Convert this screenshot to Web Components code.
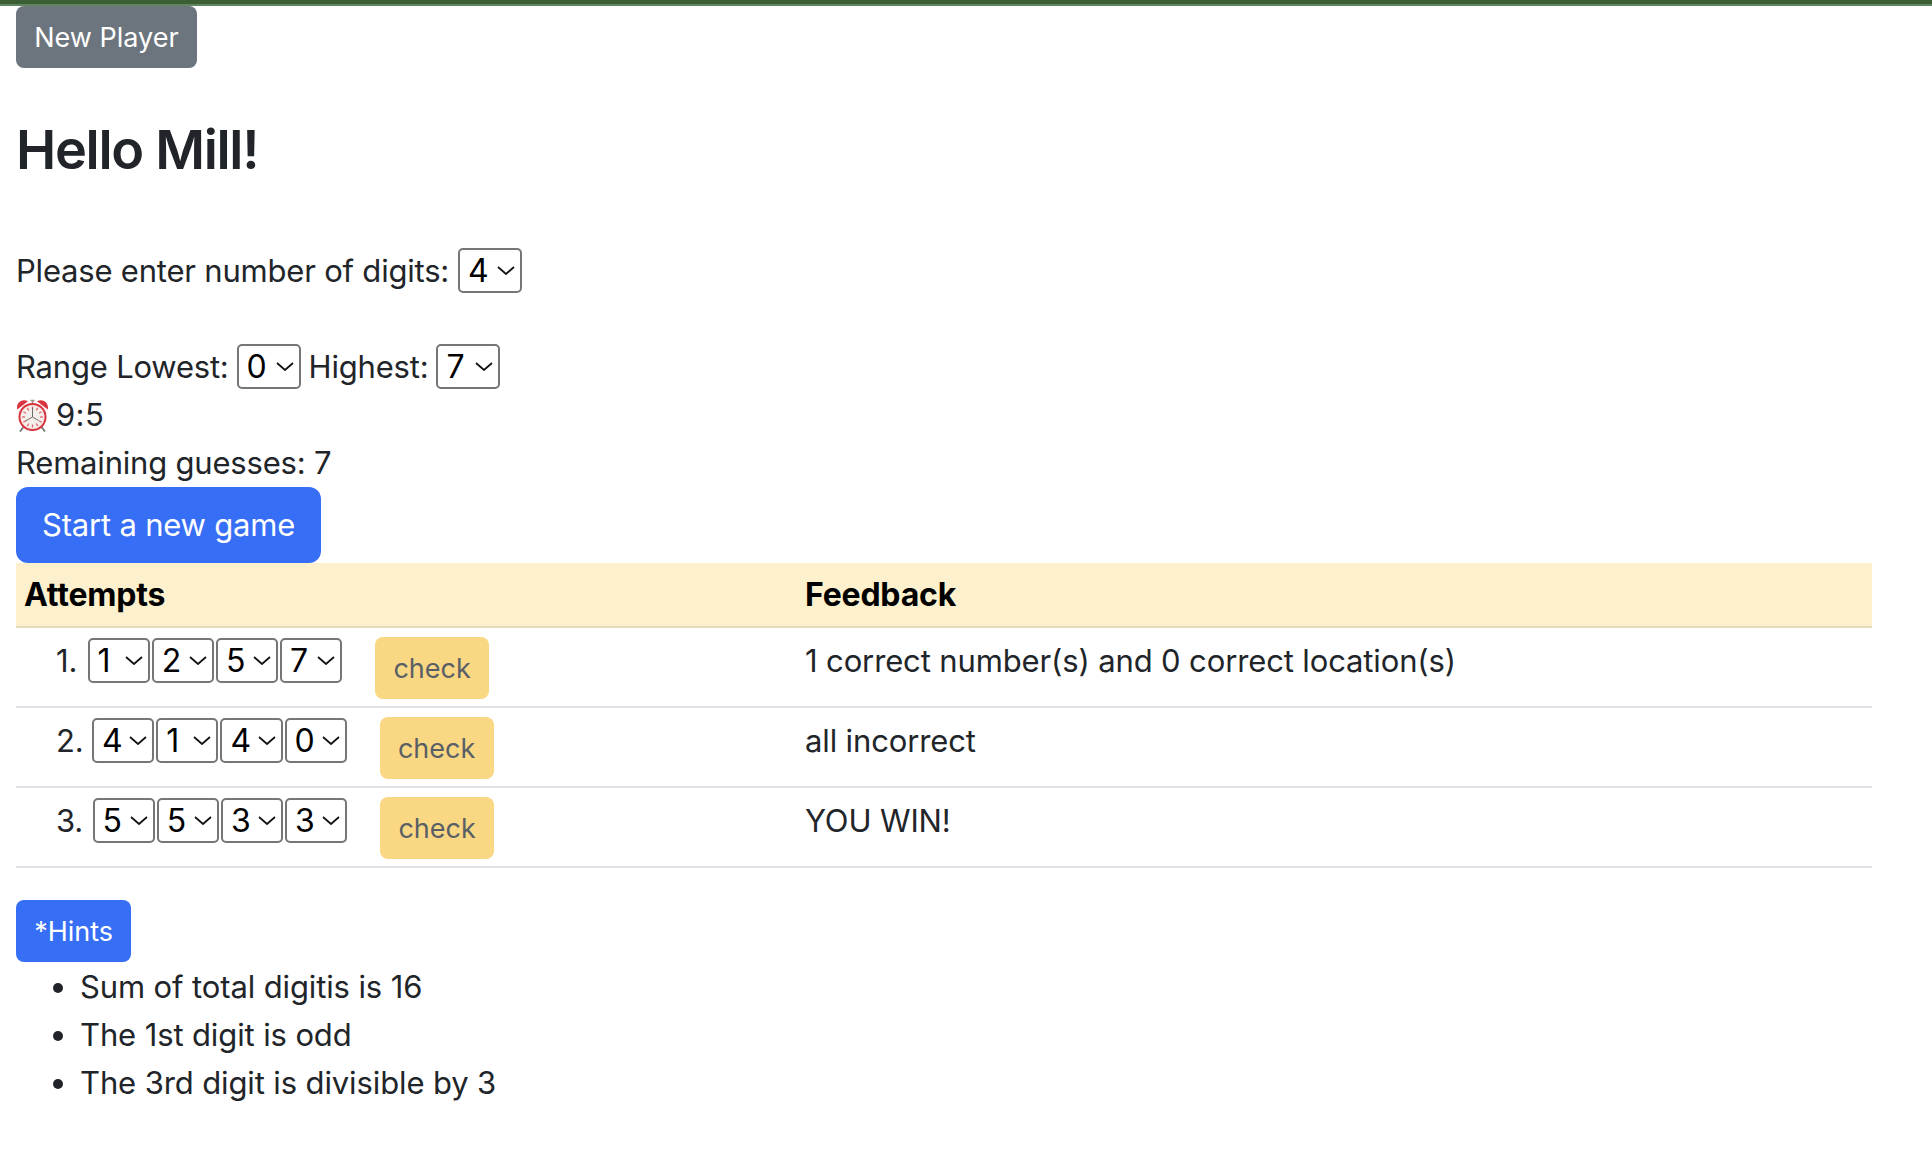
<!DOCTYPE html>
<html lang="en">
  <head>
    <meta charset="UTF-8" />
    <title>Mastermind</title>
    <style>
      html, body { margin: 0; background: #fff; }
      body {
        font-family: Inter, "Liberation Sans", sans-serif;
        font-size: 31px;
        letter-spacing: -0.2px;
        line-height: 48px;
        color: #212529;
      }
    </style>
  </head>
  <body>
    <game-app></game-app>

    <script>
      const SHARED = `
        :host { box-sizing: border-box; }
        * { box-sizing: border-box; }
      `;

      class DigitSelect extends HTMLElement {
        constructor() {
          super();
          this.attachShadow({ mode: "open" });
        }
        connectedCallback() {
          this.shadowRoot.innerHTML = `
            <style>
              ${SHARED}
              :host {
                display: inline-flex;
                flex: none;
                align-items: center;
                justify-content: space-between;
                height: 45px;
                width: var(--w, 64px);
                padding: 0 5px 0 8px;
                border: 2px solid #767676;
                border-radius: 5px;
                color: #000;
                background: #fff;
                font-size: 32px;
                letter-spacing: 0;
                line-height: 41px;
              }
              svg { display: block; width: 18px; height: 9px; }
            </style>
            <slot></slot>
            <svg viewBox="0 0 18 9" fill="none" stroke="#111" stroke-width="1.8"><path d="M1 1 9 8 17 1"/></svg>
          `;
        }
      }

      class GameButton extends HTMLElement {
        constructor() {
          super();
          this.attachShadow({ mode: "open" });
        }
        connectedCallback() {
          const kind = this.getAttribute("kind") || "primary";
          const colors = {
            primary: "background:#376ef6;color:#fff;",
            secondary: "background:#6c757d;color:#fff;",
            warning: "background:#f9d783;color:#5a5f66;",
          }[kind];
          this.shadowRoot.innerHTML = `
            <style>
              ${SHARED}
              :host { display: inline-block; vertical-align: top; }
              button {
                display: block;
                ${colors}
                font-family: inherit;
                font-size: 27px;
                letter-spacing: 0;
                height: 62px;
                padding: 0 18.2px;
                border: 0;
                border-radius: 8px;
              }
              :host([size="lg"]) button {
                height: 76px;
                padding: 0 26px 2px;
                border-radius: 12px;
                font-size: 31px;
                letter-spacing: -0.2px;
              }
            </style>
            <button type="button"><slot></slot></button>
          `;
        }
      }

      class AlarmClock extends HTMLElement {
        constructor() {
          super();
          this.attachShadow({ mode: "open" });
        }
        connectedCallback() {
          let ticks = "";
          for (let i = 0; i < 12; i++) {
            ticks += `<path d="M16 8.500v3" transform="rotate(${i * 30} 16 19)"/>`;
          }
          this.shadowRoot.innerHTML = `
            <style>
              :host { display: block; flex: none; width: 33px; height: 34px; margin-right: -2px; }
              svg { display: block; width: 100%; height: 100%; }
            </style>
            <svg viewBox="0 0 32 34">
              <path d="M14 2.500h4M16 2.500V6" stroke="#9b8f86" stroke-width="1.600"/>
              <path d="M.8 11.500C-.8 5.500 5 .2 11.500 3.200Z M31.200 11.500C32.800 5.500 27 .2 20.500 3.200Z" fill="#d9333f"/>
              <path d="M7 29 3.500 33.500M25 29l3.500 4.500" stroke="#7e7e7e" stroke-width="2"/>
              <circle cx="16" cy="19" r="14" fill="#d9333f"/>
              <circle cx="16" cy="19" r="12" fill="#f4efea"/>
              <g stroke="#e0656d" stroke-width="1.300">${ticks}</g>
              <path d="M16 19V9.500M16 19l-7 4M16 19l6 3.500" stroke="#6b6b6b" stroke-width="1" fill="none"/>
            </svg>
          `;
        }
      }

      class AttemptRow extends HTMLElement {
        constructor() {
          super();
          this.attachShadow({ mode: "open" });
        }
        connectedCallback() {
          const num = this.getAttribute("num");
          const opts = this.getAttribute("digits")
            .split("")
            .map((d) => `<digit-select style="--w:62.2px">${d}</digit-select>`)
            .join("");
          this.shadowRoot.innerHTML = `
            <style>
              ${SHARED}
              :host {
                display: grid;
                grid-template-columns: 789px 1fr;
                height: 80px;
                border-bottom: 2px solid #dee2e6;
              }
              .attempt { display: flex; align-items: flex-start; padding: 9px 0 0 40px; }
              .num { width: var(--num-w); line-height: 45px; margin-top: 1px; }
              .digits { display: flex; gap: 2px; margin-top: 1px; }
              game-button { margin-left: 33px; }
              .feedback { padding-top: 9px; letter-spacing: -0.13px; }
            </style>
            <div class="attempt">
              <span class="num">${num}.</span>
              <div class="digits">${opts}</div>
              <game-button kind="warning">check</game-button>
            </div>
            <div class="feedback"><slot></slot></div>
          `;
        }
      }

      class GameApp extends HTMLElement {
        constructor() {
          super();
          this.attachShadow({ mode: "open" });
        }
        connectedCallback() {
          this.shadowRoot.innerHTML = `
            <style>
              ${SHARED}
              :host { display: block; padding: 0 60px 0 16px; }
              .topbar {
                height: 6px;
                margin: 0 -60px 0 -16px;
                background: #3a5f35;
                border-bottom: 2px solid #5f8560;
              }
              .new-player { height: 62px; }
              h1 { margin: 50px 0 0; font-size: 54px; font-weight: 600; letter-spacing: -1.3px; line-height: 64px; }
              .line { height: 48px; display: flex; align-items: center; gap: 9px; }
              .line digit-select { margin-bottom: 1px; }
              .digits-line { margin-top: 65px; }
              .range { margin-top: 48px; gap: 8px; }
              .time { letter-spacing: 0.4px; }
              .start { height: 76px; }
              .head {
                display: grid;
                grid-template-columns: 789px 1fr;
                height: 65px;
                padding-top: 8px;
                background: #fdf1cd;
                border-bottom: 2px solid #e6dbba;
                color: #000;
                font-size: 32px;
                font-weight: 700;
              }
              .head span:first-child { padding-left: 8px; }
              .hints { margin-top: 32px; height: 63px; }
              ul { margin: 0; padding: 0 0 0 64px; letter-spacing: -0.12px; }
              li { height: 48px; }
            </style>
            <div class="topbar"></div>
            <div class="new-player"><game-button kind="secondary">New Player</game-button></div>
            <h1>Hello Mill!</h1>
            <div class="line digits-line"><span>Please enter number of digits:</span><digit-select>4</digit-select></div>
            <div class="line range"><span>Range Lowest:</span><digit-select>0</digit-select><span>Highest:</span><digit-select>7</digit-select></div>
            <div class="line"><alarm-clock></alarm-clock><span class="time">9:5</span></div>
            <div class="line">Remaining guesses: 7</div>
            <div class="start"><game-button size="lg">Start a new game</game-button></div>
            <div class="head"><span>Attempts</span><span>Feedback</span></div>
            <attempt-row style="--num-w:31.5px" num="1" digits="1257">1 correct number(s) and 0 correct location(s)</attempt-row>
            <attempt-row style="--num-w:36px" num="2" digits="4140">all incorrect</attempt-row>
            <attempt-row style="--num-w:36.5px" num="3" digits="5533">YOU WIN!</attempt-row>
            <div class="hints"><game-button>*Hints</game-button></div>
            <ul>
              <li>Sum of total digitis is 16</li>
              <li>The 1st digit is odd</li>
              <li>The 3rd digit is divisible by 3</li>
            </ul>
          `;
        }
      }

      customElements.define("digit-select", DigitSelect);
      customElements.define("game-button", GameButton);
      customElements.define("alarm-clock", AlarmClock);
      customElements.define("attempt-row", AttemptRow);
      customElements.define("game-app", GameApp);
    </script>
  </body>
</html>
